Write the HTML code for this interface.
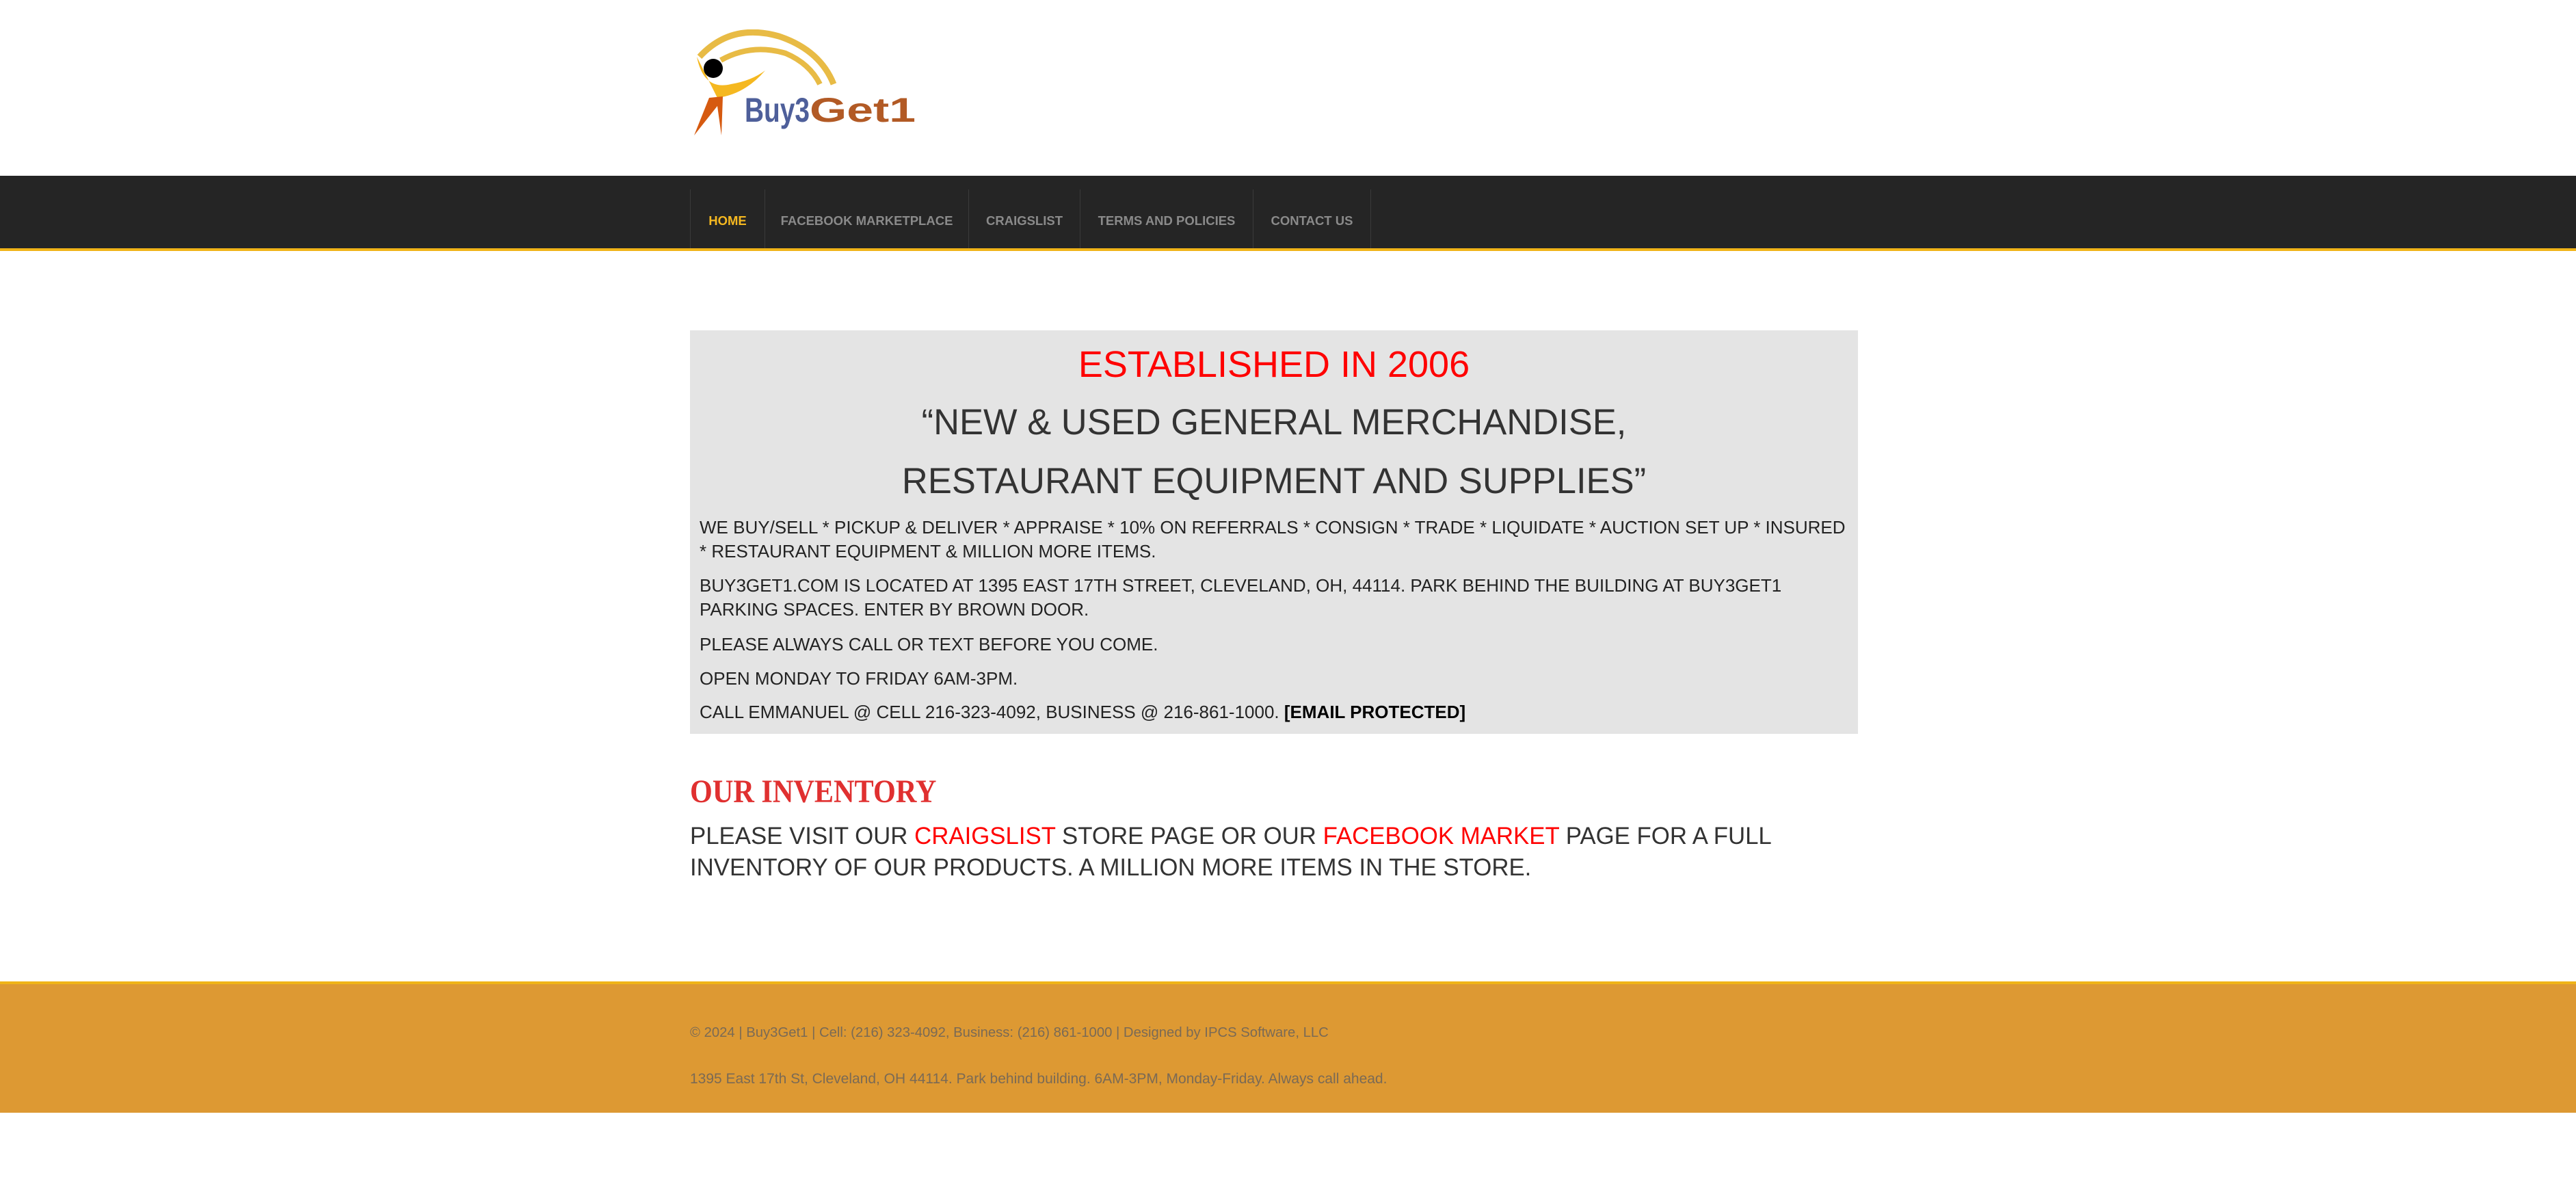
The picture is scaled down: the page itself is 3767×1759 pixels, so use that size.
<!DOCTYPE html>
<html><head><meta charset="utf-8"><style>
*{margin:0;padding:0;box-sizing:border-box}
body{width:3767px;height:1759px;background:#fff;font-family:"Liberation Sans",sans-serif;position:relative;overflow:hidden}
.nav{position:absolute;left:0;top:257px;width:3767px;height:110px;background:#252525;border-bottom:4px solid #f0b418}
.nav .it{position:absolute;top:20px;height:86px;border-left:1px solid #3a3a3a;color:#8a8a8a;font-weight:bold;font-size:18.5px;line-height:92px;text-align:center}
.box{position:absolute;left:1009px;top:483px;width:1708px;height:590px;background:#e4e4e4}
.h{position:absolute;left:0;width:100%;text-align:center;font-size:52.5px;color:#333;white-space:nowrap}
.p{position:absolute;left:14px;font-size:26px;color:#222;white-space:nowrap;line-height:35px}
.foot{position:absolute;left:0;top:1435px;width:3767px;height:192px;background:#dd9933;border-top:4px solid #f0b418}
.foot div{position:absolute;left:1009px;font-size:21px;color:#7a6a55;white-space:nowrap}
</style></head><body>
<svg style="position:absolute;left:1009px;top:43px" width="340" height="160" viewBox="0 0 340 160">
<path d="M14 40 Q60 -10 130 10 Q190 30 210 80" fill="none" stroke="#e8bb45" stroke-width="9"/>
<path d="M45 45 Q90 20 140 35 Q175 50 190 80" fill="none" stroke="#e8bb45" stroke-width="8"/>
<path d="M10 40 Q20 90 60 80 Q90 75 110 60 Q80 95 40 100 Z" fill="#f5b820"/>
<circle cx="34" cy="57" r="14" fill="#000"/>
<path d="M28 100 L6 155 L40 112 L46 155 L48 98 Z" fill="#d65a10"/>
<text x="80" y="135" font-family="Liberation Sans,sans-serif" font-weight="bold" font-size="50" fill="#4e5f9a" textLength="95" lengthAdjust="spacingAndGlyphs">Buy3</text>
<text x="175" y="135" font-family="Liberation Sans,sans-serif" font-weight="bold" font-size="50" fill="#b25a25" textLength="155" lengthAdjust="spacingAndGlyphs">Get1</text>
</svg>
<div class="nav">
<div class="it" style="left:1009px;width:109px;color:#f5b820">HOME</div>
<div class="it" style="left:1118px;width:298px">FACEBOOK MARKETPLACE</div>
<div class="it" style="left:1416px;width:163px">CRAIGSLIST</div>
<div class="it" style="left:1579px;width:253px">TERMS AND POLICIES</div>
<div class="it" style="left:1832px;width:173px;border-right:1px solid #3a3a3a">CONTACT US</div>
</div>
<div class="box">
<div class="h" style="top:19px;color:#ff0000;font-size:54px">ESTABLISHED IN 2006</div>
<div class="h" style="top:104px">“NEW &amp; USED GENERAL MERCHANDISE,</div>
<div class="h" style="top:190px">RESTAURANT EQUIPMENT AND SUPPLIES”</div>
<div class="p" style="top:271px">WE BUY/SELL * PICKUP &amp; DELIVER * APPRAISE * 10% ON REFERRALS * CONSIGN * TRADE * LIQUIDATE * AUCTION SET UP * INSURED<br>* RESTAURANT EQUIPMENT &amp; MILLION MORE ITEMS.</div>
<div class="p" style="top:356px">BUY3GET1.COM IS LOCATED AT 1395 EAST 17TH STREET, CLEVELAND, OH, 44114. PARK BEHIND THE BUILDING AT BUY3GET1<br>PARKING SPACES. ENTER BY BROWN DOOR.</div>
<div class="p" style="top:442px">PLEASE ALWAYS CALL OR TEXT BEFORE YOU COME.</div>
<div class="p" style="top:492px">OPEN MONDAY TO FRIDAY 6AM-3PM.</div>
<div class="p" style="top:541px">CALL EMMANUEL @ CELL 216-323-4092, BUSINESS @ 216-861-1000. <span style="color:#000;font-weight:bold">[EMAIL PROTECTED]</span></div>
</div>
<div style="position:absolute;left:1009px;top:1130px;font-family:'Liberation Serif',serif;font-weight:bold;font-size:48px;color:#e03030;white-space:nowrap;transform:scaleX(0.88);transform-origin:left top">OUR INVENTORY</div>
<div style="position:absolute;left:1009px;top:1200px;font-size:34.8px;line-height:46px;color:#333;white-space:nowrap">PLEASE VISIT OUR <span style="color:#f00">CRAIGSLIST</span> STORE PAGE OR OUR <span style="color:#f00">FACEBOOK MARKET</span> PAGE FOR A FULL<br>INVENTORY OF OUR PRODUCTS. A MILLION MORE ITEMS IN THE STORE.</div>
<div class="foot">
<div style="top:60px;font-size:20.3px">© 2024 | Buy3Get1 | Cell: (216) 323-4092, Business: (216) 861-1000 | Designed by IPCS Software, LLC</div>
<div style="top:127px">1395 East 17th St, Cleveland, OH 44114. Park behind building. 6AM-3PM, Monday-Friday. Always call ahead.</div>
</div>
</body></html>
